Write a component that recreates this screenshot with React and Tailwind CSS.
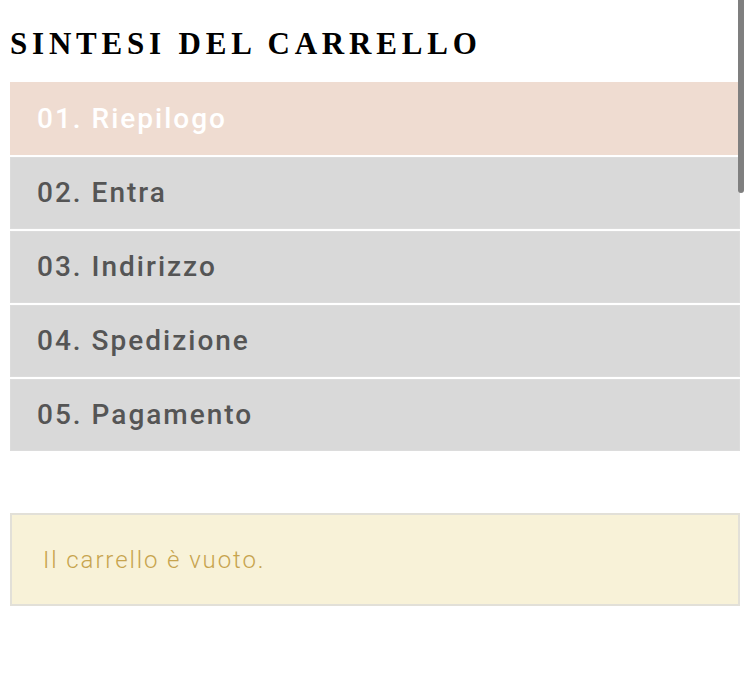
import React from "react";

const steps = ["01. Riepilogo", "02. Entra", "03. Indirizzo", "04. Spedizione", "05. Pagamento"];

export default function App() {
  return (
    <div className="relative w-[750px] h-[683px] bg-white overflow-hidden">
      <div className="px-[10px]">
        <h1
          className="pt-[24px] pb-[18px] text-[31px] leading-[40px] font-bold uppercase tracking-[4.8px] text-black"
          style={{ fontFamily: '"Liberation Serif", serif' }}
        >
          Sintesi del carrello
        </h1>
        <div className="flex flex-col gap-[2px]">
          {steps.map((s, i) => (
            <div
              key={s}
              className={
                i === 0
                  ? "h-[73px] flex items-center pl-[26px] bg-[#efdcd1] border border-[#efdcd1] text-white text-[28px] font-medium tracking-[2px]"
                  : "h-[72px] flex items-center pl-[26px] bg-[#d9d9d9] border border-[#dcdcdc] text-[#555555] text-[28px] font-medium tracking-[2px]"
              }
              style={{ fontFamily: "Roboto, sans-serif" }}
            >
              {s}
            </div>
          ))}
        </div>
        <div
          className="mt-[62px] h-[93px] flex items-center pl-[31px] bg-[#f8f2d8] border-2 border-[#e2e0d8] text-[#c7a44e] text-[24px] font-light tracking-[1.9px]"
          style={{ fontFamily: "Roboto, sans-serif" }}
        >
          Il carrello è vuoto.
        </div>
      </div>
      <div className="absolute left-[738px] top-0 w-[6px] h-[193px] bg-[#7f7f7f] rounded-b-[3px]" />
    </div>
  );
}
